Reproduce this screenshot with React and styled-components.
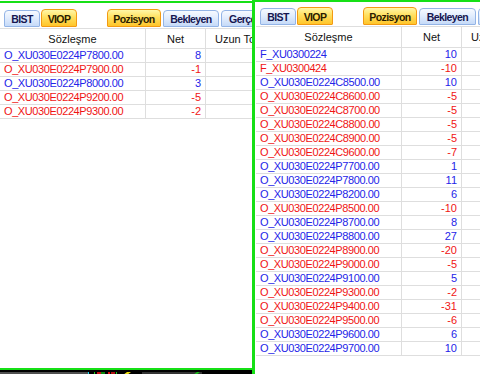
import React from "react";
import styled, { createGlobalStyle } from "styled-components";

const Global = createGlobalStyle`
  html, body { margin: 0; padding: 0; background: #fff; }
  body { width: 480px; height: 374px; overflow: hidden; }
  * { box-sizing: border-box; }
`;

const Screen = styled.div`
  display: flex;
  width: 480px;
  height: 374px;
  overflow: hidden;
  font-family: "Liberation Sans", Arial, sans-serif;
  background: #fff;
`;

const LeftWin = styled.div`
  width: 252px;
  flex: none;
  display: flex;
  flex-direction: column;
  padding-top: 1px;
`;

const LeftFrame = styled.div`
  flex: 1;
  border-top: 2px solid #16e016;
  border-bottom: 2px solid #16e016;
  background: #fff;
  overflow: hidden;
  display: flex;
  flex-direction: column;
`;

const Strip = styled.div`
  height: 4px;
  background: #000;
  flex: none;
  line-height: 0;
`;

const RightWin = styled.div`
  flex: 1;
  border-top: 2px solid #16e016;
  border-left: 3px solid #16e016;
  background: #fff;
  overflow: hidden;
  display: flex;
  flex-direction: column;
`;

const TabBar = styled.div`
  height: ${(p) => p.$h}px;
  display: flex;
  align-items: flex-end;
  padding: 0 0 1px ${(p) => p.$pl}px;
  white-space: nowrap;
  flex: none;
  overflow: hidden;
`;

const Tab = styled.div`
  flex: none;
  width: ${(p) => p.$w}px;
  height: ${(p) => (p.$on ? 18 : 17)}px;
  margin-left: ${(p) => p.$ml || 0}px;
  display: flex;
  align-items: center;
  justify-content: center;
  font-size: 10.5px;
  font-weight: bold;
  letter-spacing: -0.6px;
  border-radius: 4px 4px 1px 1px;
  border: 1px solid ${(p) => (p.$on ? "#f39a12" : "#93b4e6")};
  color: ${(p) => (p.$on ? "#2a1c00" : "#161650")};
  background: ${(p) =>
    p.$on
      ? "linear-gradient(#fff7a8, #ffe060 45%, #ffc52a)"
      : "linear-gradient(#f7faff, #e2edfd 45%, #c5daf8)"};
  padding-top: 1px;
  overflow: hidden;
`;

const Grid = styled.div`
  display: grid;
  grid-template-columns: 146px 60px 90px;
  margin-left: ${(p) => p.$ml}px;
  flex: none;
`;

const HeadCell = styled.div`
  height: ${(p) => p.$h}px;
  border-top: 1px solid #dedede;
  border-bottom: 1px solid #dedede;
  border-right: 1px solid #dedede;
  display: flex;
  align-items: center;
  justify-content: ${(p) => p.$align || "center"};
  padding-left: ${(p) => p.$pl || 0}px;
  font-size: 11px;
  color: #111;
  white-space: nowrap;
  overflow: hidden;
`;

const Cell = styled.div`
  height: 14px;
  border-bottom: 1px solid #dedede;
  border-right: 1px solid #dedede;
  font-size: 11px;
  line-height: 13px;
  letter-spacing: ${(p) => (p.$num ? "0" : "-0.4px")};
  color: ${(p) => (p.$neg ? "#f01414" : "#2424e8")};
  text-align: ${(p) => (p.$num ? "right" : "left")};
  padding: 0 ${(p) => (p.$num ? 4 : 0)}px 0 ${(p) => (p.$num ? 0 : 4)}px;
  white-space: nowrap;
  overflow: hidden;
`;

const leftRows = [
  ["O_XU030E0224P7800.00", 8],
  ["O_XU030E0224P7900.00", -1],
  ["O_XU030E0224P8000.00", 3],
  ["O_XU030E0224P9200.00", -5],
  ["O_XU030E0224P9300.00", -2],
];

const rightRows = [
  ["F_XU0300224", 10],
  ["F_XU0300424", -10],
  ["O_XU030E0224C8500.00", 10],
  ["O_XU030E0224C8600.00", -5],
  ["O_XU030E0224C8700.00", -5],
  ["O_XU030E0224C8800.00", -5],
  ["O_XU030E0224C8900.00", -5],
  ["O_XU030E0224C9600.00", -7],
  ["O_XU030E0224P7700.00", 1],
  ["O_XU030E0224P7800.00", 11],
  ["O_XU030E0224P8200.00", 6],
  ["O_XU030E0224P8500.00", -10],
  ["O_XU030E0224P8700.00", 8],
  ["O_XU030E0224P8800.00", 27],
  ["O_XU030E0224P8900.00", -20],
  ["O_XU030E0224P9000.00", -5],
  ["O_XU030E0224P9100.00", 5],
  ["O_XU030E0224P9300.00", -2],
  ["O_XU030E0224P9400.00", -31],
  ["O_XU030E0224P9500.00", -6],
  ["O_XU030E0224P9600.00", 6],
  ["O_XU030E0224P9700.00", 10],
];

function Tabs({ h, pl, bekW }) {
  return (
    <TabBar $h={h} $pl={pl}>
      <Tab $w={36}>BIST</Tab>
      <Tab $w={36} $on $ml={1}>VIOP</Tab>
      <Tab $w={54} $on $ml={30}>Pozisyon</Tab>
      <Tab $w={bekW} $ml={2}>Bekleyen</Tab>
      <Tab $w={72} $ml={2}>Gerçekleşen</Tab>
    </TabBar>
  );
}

function Table({ rows, ml, hh }) {
  return (
    <Grid $ml={ml}>
      <HeadCell $h={hh}>Sözleşme</HeadCell>
      <HeadCell $h={hh}>Net</HeadCell>
      <HeadCell $h={hh} $align="flex-start" $pl={9}>Uzun Toplam</HeadCell>
      {rows.map(([name, net]) => (
        <React.Fragment key={name}>
          <Cell $neg={net < 0}>{name}</Cell>
          <Cell $num $neg={net < 0}>{net}</Cell>
          <Cell />
        </React.Fragment>
      ))}
    </Grid>
  );
}

function TaskStrip() {
  return (
    <svg width="252" height="4" viewBox="0 0 252 4">
      <rect x="0" y="1" width="88" height="3" fill="#505050" />
      <rect x="88" y="1" width="1" height="3" fill="#19d6f0" />
      <rect x="94" y="1" width="1" height="3" fill="#18d018" />
      <rect x="97" y="1" width="4" height="3" fill="#c81010" />
      <rect x="101" y="1" width="4" height="3" fill="#0a8a0a" />
      <rect x="108" y="1" width="2" height="3" fill="#e01010" />
      <rect x="111" y="1" width="4" height="3" fill="#b01010" />
      <rect x="116" y="1" width="1" height="3" fill="#18d018" />
      <path d="M123 4 L127 1 L131 1 L127 4 Z" fill="#f0e010" />
      <rect x="142" y="1" width="60" height="3" fill="#333" />
      <path d="M193 4 L197 1 L200 1 L196 4 Z" fill="#18c018" />
    </svg>
  );
}

export default function App() {
  return (
    <>
      <Global />
      <Screen>
        <LeftWin>
          <LeftFrame>
            <Tabs h={25} pl={4} bekW={56} />
            <Table rows={leftRows} ml={0} hh={21} />
          </LeftFrame>
          <Strip>
            <TaskStrip />
          </Strip>
        </LeftWin>
        <RightWin>
          <Tabs h={24} pl={5} bekW={57} />
          <Table rows={rightRows} ml={1} hh={22} />
        </RightWin>
      </Screen>
    </>
  );
}
